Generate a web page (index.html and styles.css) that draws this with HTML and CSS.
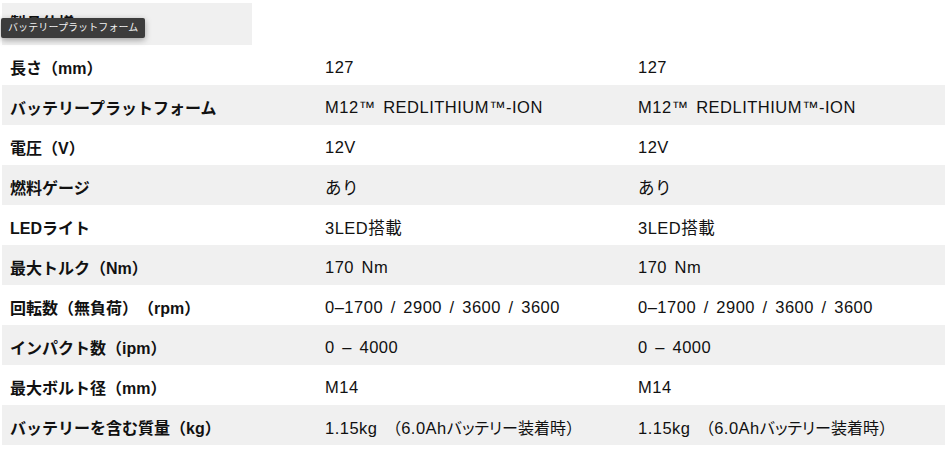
FILE: index.html
```html
<!DOCTYPE html>
<html lang="ja">
<head>
<meta charset="utf-8">
<link rel="stylesheet" href="styles.css">
</head>
<body>
<div class="page">
  <div class="head">
    <div class="head-cell">製品仕様</div>
    <div class="tooltip">バッテリープラットフォーム</div>
  </div>
  <div class="spec">
    <div class="row"><div class="label">長さ（mm）</div><div class="val">127</div><div class="val">127</div></div>
    <div class="row alt"><div class="label">バッテリープラットフォーム</div><div class="val">M12™ REDLITHIUM™-ION</div><div class="val">M12™ REDLITHIUM™-ION</div></div>
    <div class="row"><div class="label">電圧（V）</div><div class="val">12V</div><div class="val">12V</div></div>
    <div class="row alt"><div class="label">燃料ゲージ</div><div class="val">あり</div><div class="val">あり</div></div>
    <div class="row"><div class="label">LEDライト</div><div class="val">3LED搭載</div><div class="val">3LED搭載</div></div>
    <div class="row alt"><div class="label">最大トルク（Nm）</div><div class="val">170 Nm</div><div class="val">170 Nm</div></div>
    <div class="row"><div class="label">回転数（無負荷）（rpm）</div><div class="val">0–1700 / 2900 / 3600 / 3600</div><div class="val">0–1700 / 2900 / 3600 / 3600</div></div>
    <div class="row alt"><div class="label">インパクト数（ipm）</div><div class="val">0 – 4000</div><div class="val">0 – 4000</div></div>
    <div class="row"><div class="label">最大ボルト径（mm）</div><div class="val">M14</div><div class="val">M14</div></div>
    <div class="row alt"><div class="label">バッテリーを含む質量（kg）</div><div class="val">1.15kg <span class="ja">（</span>6.0Ah<span class="ja kana">バッテリー</span><span class="ja">装着時）</span></div><div class="val">1.15kg <span class="ja">（</span>6.0Ah<span class="ja kana">バッテリー</span><span class="ja">装着時）</span></div></div>
  </div>
</div>
</body>
</html>
```

FILE: styles.css
```css
html, body {
  margin: 0;
  padding: 0;
  background: #ffffff;
}
body {
  font-family: "Liberation Sans", "Noto Sans CJK JP", sans-serif;
  font-size: 16px;
  color: #111111;
  text-spacing-trim: space-all;
}
.page {
  padding: 3px 0 0 2px;
}
.head {
  position: relative;
  height: 42px;
}
.head-cell {
  width: 250px;
  height: 42px;
  background: #f0f0f0;
  font-weight: bold;
  line-height: 42px;
  padding-left: 8px;
  box-sizing: border-box;
}
.tooltip {
  position: absolute;
  left: -1px;
  top: 15px;
  height: 20px;
  line-height: 20px;
  padding: 0 7px;
  background: #3c3c3c;
  color: #f2f2f2;
  font-size: 10px;
  letter-spacing: 0.1px;
  border-radius: 2px;
  box-shadow: 0 2px 6px rgba(0,0,0,0.35);
  white-space: nowrap;
}
.row {
  display: grid;
  grid-template-columns: 315px 313px 1fr;
  height: 40px;
  align-items: center;
}
.row.alt {
  background: #f0f0f0;
}
.label, .val {
  padding: 4px 0 0 8px;
}
.label {
  font-weight: bold;
}
.val {
  font-size: 16.5px;
  letter-spacing: 0.5px;
  word-spacing: 2.5px;
}
.val .ja {
  font-size: 16px;
  letter-spacing: 0;
}
.val .kana {
  font-feature-settings: "palt";
}
```
